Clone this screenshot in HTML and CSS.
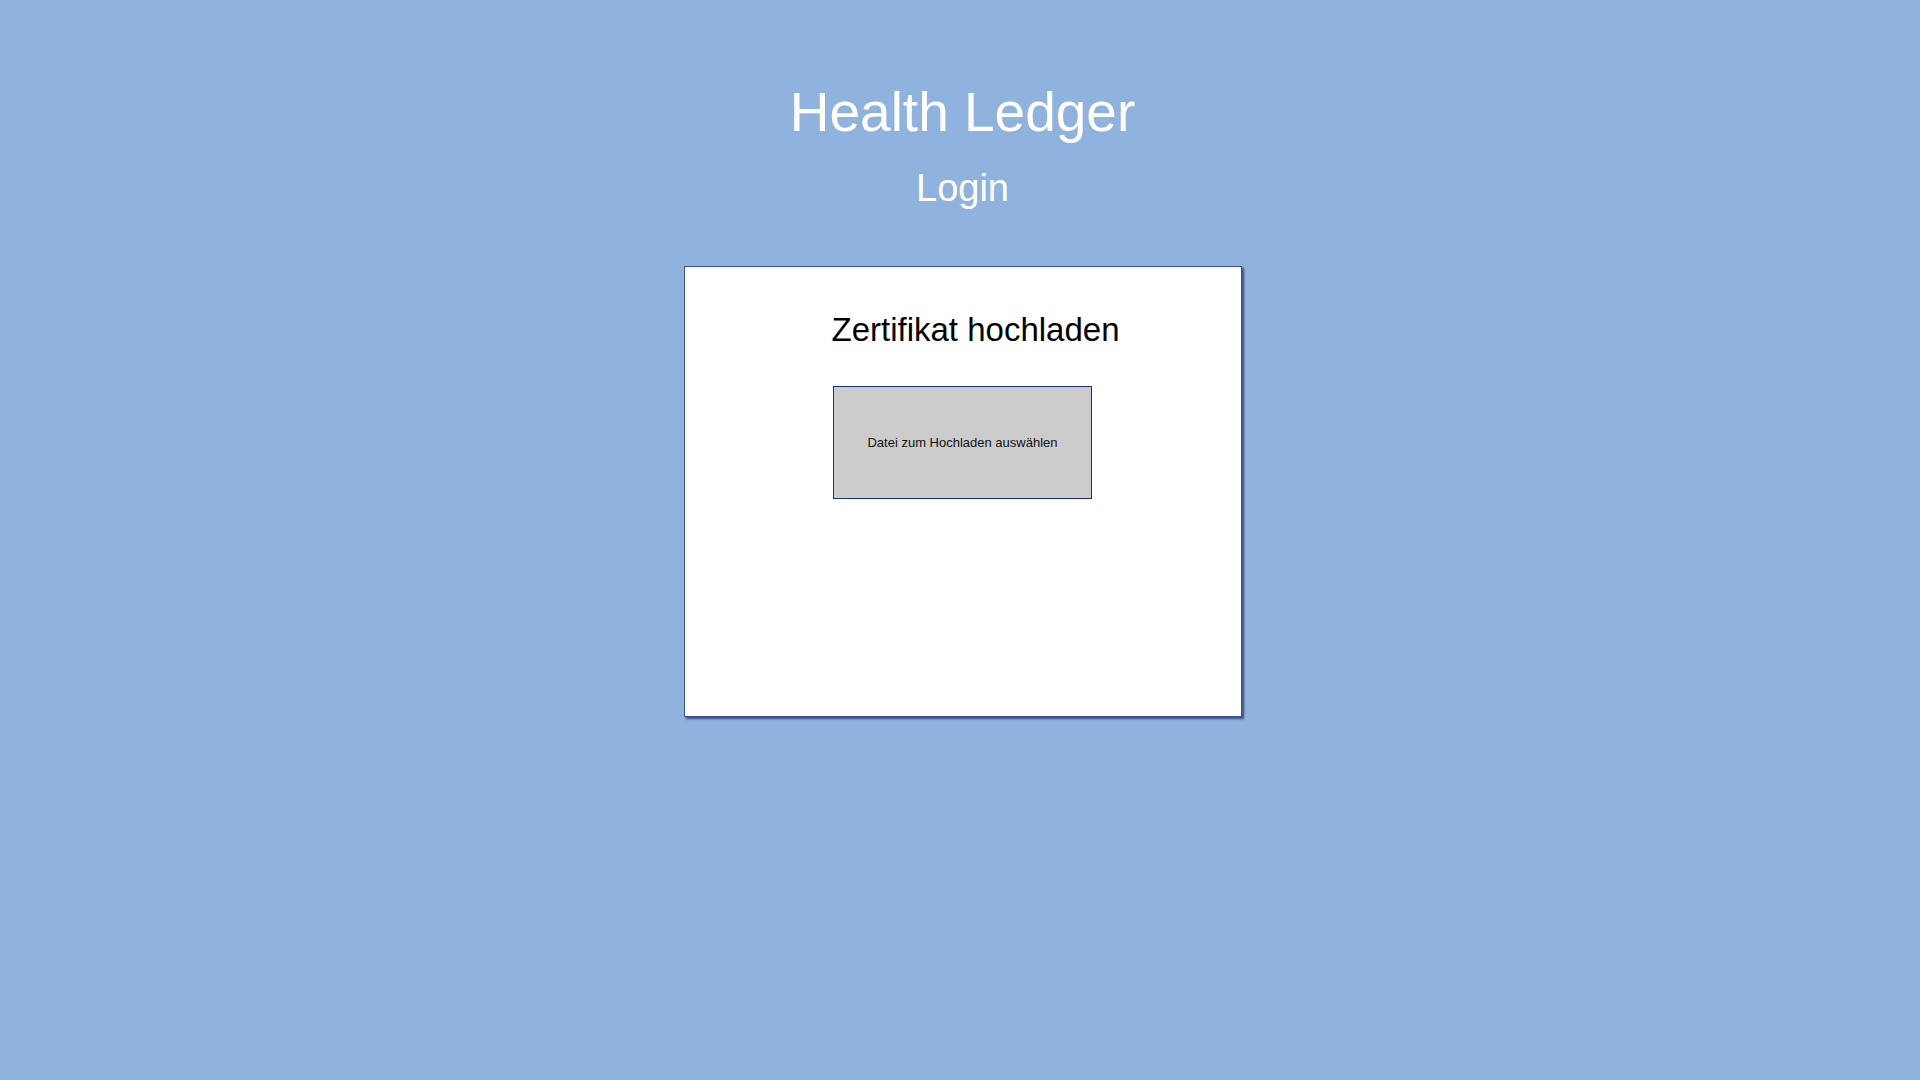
FILE: index.html
```html
<!DOCTYPE html>
<html lang="de">
<head>
<meta charset="utf-8">
<title>Health Ledger - Login</title>
<link rel="stylesheet" href="styles.css">
</head>
<body>
<main class="page">
  <h1 class="app-title">Health Ledger</h1>
  <h2 class="page-title">Login</h2>
  <section class="card">
    <h3 class="card-title">Zertifikat hochladen</h3>
    <label class="upload-button">
      <input type="file" class="file-input">
      <span>Datei zum Hochladen auswählen</span>
    </label>
  </section>
</main>
</body>
</html>
```

FILE: styles.css
```css
html, body {
  margin: 0;
  padding: 0;
}

body {
  background: #8fb3de;
  font-family: "Liberation Sans", Arial, sans-serif;
  width: 1920px;
  height: 1080px;
  overflow: hidden;
}

.page {
  display: flex;
  flex-direction: column;
  align-items: center;
  padding-top: 81px;
  padding-left: 5px;
}

.app-title {
  margin: 0;
  font-size: 55px;
  font-weight: normal;
  line-height: 1.15;
  color: #ffffff;
}

.page-title {
  margin: 23px 0 0 0;
  font-size: 38px;
  font-weight: normal;
  line-height: 1.15;
  color: #ffffff;
}

.card {
  box-sizing: border-box;
  margin-top: 55px;
  width: 558px;
  height: 451px;
  background: #ffffff;
  border: 1px solid #3c50a8;
  box-shadow: 2px 2px 2px rgba(30, 40, 90, 0.75);
  display: flex;
  flex-direction: column;
  align-items: center;
  padding-top: 44px;
}

.card-title {
  margin: 0;
  font-size: 33px;
  font-weight: normal;
  line-height: 1.15;
  color: #000000;
  padding-left: 26px;
}

.upload-button {
  box-sizing: border-box;
  margin-top: 37px;
  width: 259px;
  height: 113px;
  background: #cccccc;
  border: 1px solid #1f2e7a;
  display: flex;
  align-items: center;
  justify-content: center;
  font-size: 13px;
  color: #111111;
  cursor: pointer;
}

.file-input {
  display: none;
}
```
